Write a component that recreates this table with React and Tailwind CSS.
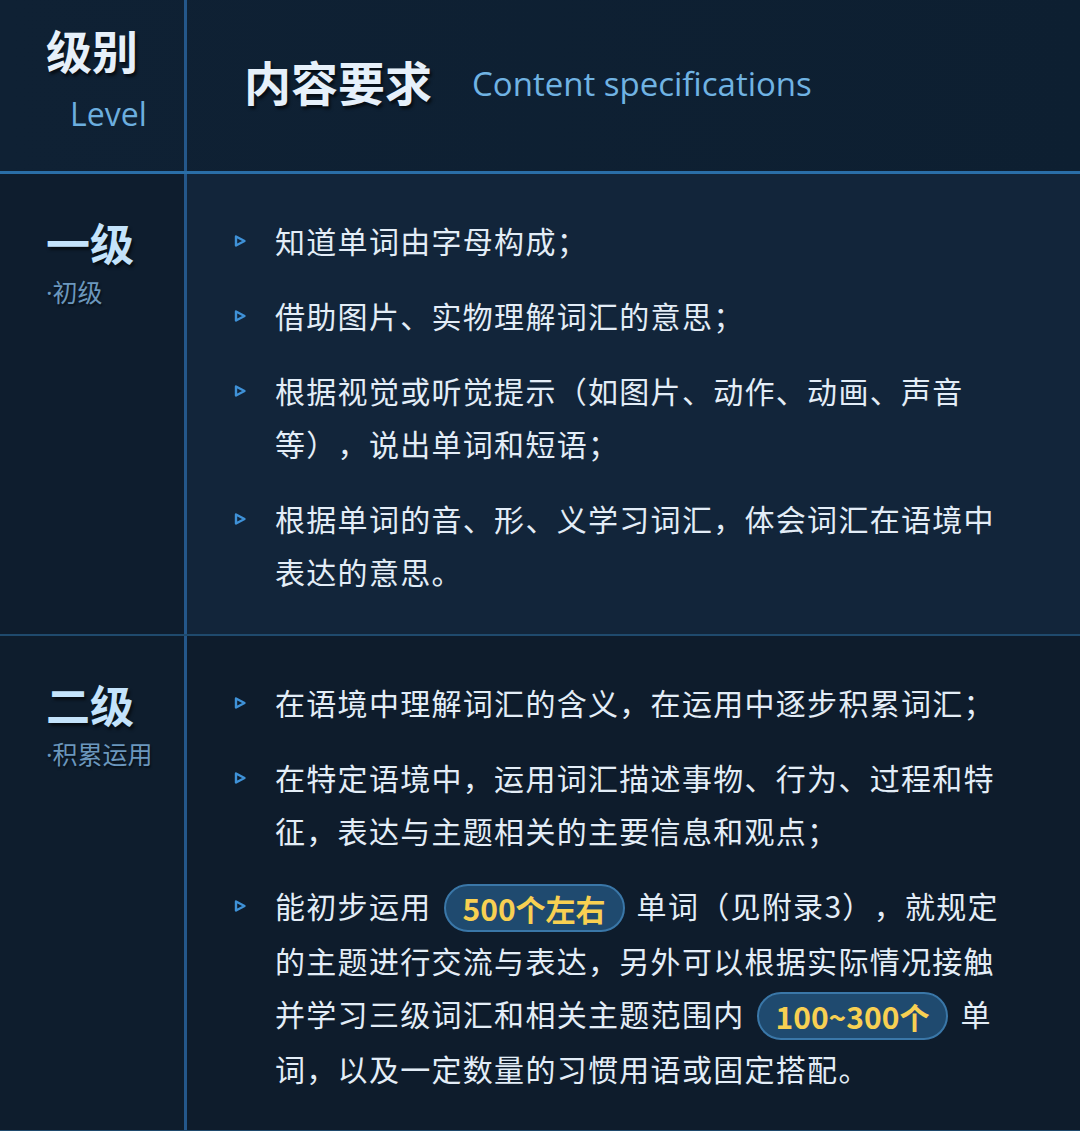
const FONT = '"Noto Sans CJK SC", "Noto Sans", sans-serif';
const LATIN = '"Open Sans", "Noto Sans", sans-serif';

function Bullet() {
    return (
        <svg width="14" height="14" viewBox="0 0 14 14" className="absolute left-[-42px] top-[20px]">
            <path d="M3 2.5 L11.5 7 L3 11.5 Z" fill="none" stroke="#3f92d8" strokeWidth="2.4" strokeLinejoin="round" />
        </svg>
    );
}

function Badge({ children }) {
    return (
        <span className="inline-flex items-center h-[48px] px-[17px] mx-[12px] rounded-full border-2 border-[#3a77a8] bg-[#1f4a6f] text-[#f8d052] font-bold tracking-normal align-middle leading-none relative top-[-2px]">
            {children}
        </span>
    );
}

function Item({ children }) {
    return (
        <li className="relative text-[30px] leading-[53px] tracking-[1.3px] text-[#e3edf7] [text-spacing-trim:space-all]">
            <Bullet />
            {children}
        </li>
    );
}

function LevelCell({ name, sub, bg }) {
    return (
        <div className={`w-[184px] shrink-0 pl-[46px] pt-[42px] ${bg}`}>
            <div className="text-[44px] font-bold leading-[52px] text-[#c4e3fb] [text-shadow:2px_3px_3px_rgba(0,0,0,0.55)]">{name}</div>
            <div className="mt-[6px] text-[25px] leading-[34px] text-[#6b97bd] [text-shadow:1px_2px_2px_rgba(0,0,0,0.5)]">
                <span style={{ fontFamily: LATIN }}>·</span>{sub}
            </div>
        </div>
    );
}

function App() {
    return (
        <div lang="zh-CN" className="w-[1080px] h-[1131px] overflow-hidden bg-[#0e1d2d]" style={{ fontFamily: FONT }}>
            {/* header */}
            <div className="flex h-[171px] bg-gradient-to-r from-[#0f2134] to-[#0d1f31]">
                <div className="w-[184px] shrink-0 pl-[46px] pt-[22px]">
                    <div className="text-[46px] font-bold leading-[54px] text-[#e6f0fa] [text-shadow:2px_3px_3px_rgba(0,0,0,0.6)]">级别</div>
                    <div className="ml-[24px] mt-[18px] text-[32px] leading-[40px] text-[#6caedf]" style={{ fontFamily: LATIN }}>Level</div>
                </div>
                <div className="w-[3px] bg-[#24578a]" />
                <div className="flex items-center gap-[40px] pl-[57px] pb-[8px]">
                    <div className="text-[47px] font-bold text-[#e6f0fa] [text-shadow:2px_3px_3px_rgba(0,0,0,0.6)]">内容要求</div>
                    <div className="text-[33px] text-[#70b3e3] pt-[4px]" style={{ fontFamily: LATIN }}>Content specifications</div>
                </div>
            </div>
            <div className="h-[3px] bg-[#2a6ea7]" />

            {/* level 1 */}
            <div className="flex h-[460px]">
                <LevelCell name="一级" sub="初级" bg="bg-[#0e1d2e]" />
                <div className="w-[3px] bg-[#24578a]" />
                <div className="flex-1 bg-[#12253a] pl-[88px] pt-[40px]">
                    <ul className="w-[735px] flex flex-col gap-[22px]">
                        <Item>知道单词由字母构成；</Item>
                        <Item>借助图片、实物理解词汇的意思；</Item>
                        <Item>根据视觉或听觉提示（如图片、动作、动画、声音等），说出单词和短语；</Item>
                        <Item>根据单词的音、形、义学习词汇，体会词汇在语境中表达的意思。</Item>
                    </ul>
                </div>
            </div>
            <div className="h-[2px] bg-[#1f4a6d]" />

            {/* level 2 */}
            <div className="flex h-[494px]">
                <LevelCell name="二级" sub="积累运用" bg="bg-[#0e1d2d]" />
                <div className="w-[3px] bg-[#24578a]" />
                <div className="flex-1 bg-[#0e1c2c] pl-[88px] pt-[40px]">
                    <ul className="w-[735px] flex flex-col gap-[22px]">
                        <Item>在语境中理解词汇的含义，在运用中逐步积累词汇；</Item>
                        <Item>在特定语境中，运用词汇描述事物、行为、过程和特征，表达与主题相关的主要信息和观点；</Item>
                        <Item>
                            能初步运用<Badge>500个左右</Badge>单词（见附录3），就规定的主题进行交流与表达，另外可以根据实际情况接触并学习三级词汇和相关主题范围内<Badge>100~300个</Badge>单词，以及一定数量的习惯用语或固定搭配。
                        </Item>
                    </ul>
                </div>
            </div>
            <div className="h-[1px] bg-[#1f4a6d]" />
        </div>
    );
}

export default App;
